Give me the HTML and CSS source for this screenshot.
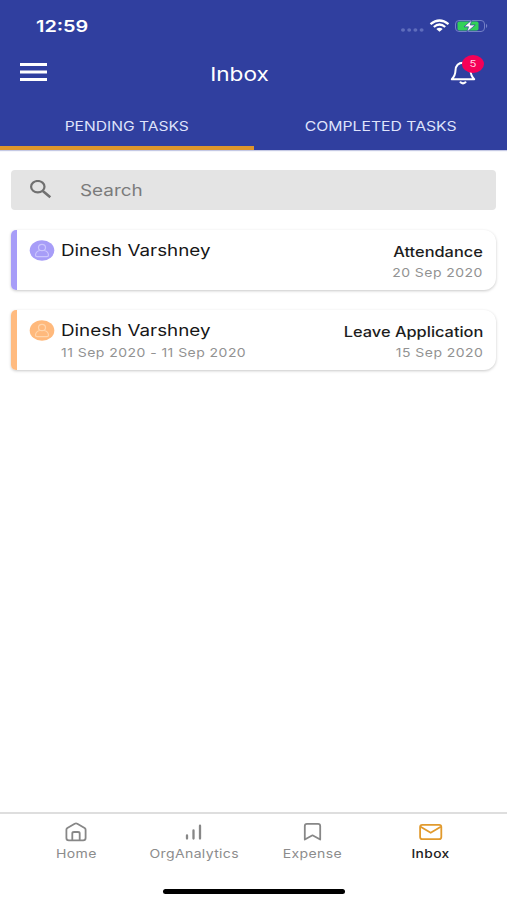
FILE: index.html
```html
<!DOCTYPE html>
<html lang="en">
<head>
<meta charset="utf-8">
<title>Inbox</title>
<link rel="stylesheet" href="styles.css">
</head>
<body>
<div class="screen">
  <header class="header">
    <div class="status">
      <span class="wide time">12:59</span>
      <svg class="status-icons" width="88" height="16" viewBox="0 0 88 16">
        <g fill="#5f6dbc"><ellipse cx="3" cy="12" rx="2" ry="1.700"/><ellipse cx="9.200" cy="12" rx="2" ry="1.700"/><ellipse cx="15.400" cy="12" rx="2" ry="1.700"/><ellipse cx="21.600" cy="12" rx="2" ry="1.700"/></g>
        <g fill="none" stroke="#fff" stroke-width="2.200"><path d="M30.500 6.200Q39.500-1.200 48.500 6.200"/><path d="M33.800 9Q39.500 4 45.200 9"/></g>
        <path d="M36.300 11Q39.500 8.600 42.700 11L39.500 13.800Z" fill="#fff"/>
        <rect x="55.500" y="2.500" width="29" height="11" rx="3.500" fill="none" stroke="#7480c6"/>
        <rect x="57.500" y="3.500" width="21" height="9" rx="1.800" fill="#32d158"/>
        <path d="M71.800 2L64 8.800H68.500L67 14L75.200 7H70.200Z" fill="#fff" stroke="#303f9f" stroke-width=".7"/>
        <path d="M86 5.800Q88.500 8 86 10.200Z" fill="#7480c6"/>
      </svg>
    </div>
    <div class="titlebar">
      <svg class="menu" width="28" height="20" viewBox="0 0 28 20"><path d="M1 1.500H28M1 9H28M1 16.500H28" stroke="#fff" stroke-width="3"/></svg>
      <h1 class="wide title">Inbox</h1>
      <div class="bell">
        <svg width="26" height="24" viewBox="0 0 26 24" fill="none" stroke="#fff" stroke-width="2" stroke-linecap="round" stroke-linejoin="round"><path d="M1.800 18.200H24.200C21.500 15.500 20.700 13.800 20.500 9.500C20.200 4.300 17.500 1.800 13 1.800S5.800 4.300 5.500 9.500C5.300 13.800 4.500 15.500 1.800 18.200Z"/><path d="M10.500 21.300Q13 23.400 15.500 21.300"/></svg>
        <span class="badge"><span class="wide">5</span></span>
      </div>
    </div>
    <nav class="tabs">
      <div class="tab active"><span class="wide tab-pending">PENDING TASKS</span></div>
      <div class="tab"><span class="wide tab-completed">COMPLETED TASKS</span></div>
    </nav>
  </header>
  <main class="content">
    <div class="search">
      <svg width="24" height="20" viewBox="0 0 24 20" fill="none" stroke="#707070"><ellipse cx="8.800" cy="6.700" rx="6.700" ry="5.700" stroke-width="2.200"/><path d="M13.800 11L21.300 17.300" stroke-width="2.600"/></svg>
      <span class="wide placeholder">Search</span>
    </div>
    <article class="card violet">
      <svg class="avatar" width="26" height="22" viewBox="0 0 26 22"><ellipse class="disc" cx="13" cy="10.500" rx="12.300" ry="10.200"/><g class="person"><ellipse cx="13" cy="7.500" rx="3.500" ry="3.200"/><path d="M10.800 10.500Q6.500 11.500 6.500 15.300Q6.500 16.600 8 16.600H18Q19.500 16.600 19.500 15.300Q19.500 11.500 15.200 10.500"/></g></svg>
      <div class="who"><div class="wide name">Dinesh Varshney</div></div>
      <div class="what"><div class="wide kind">Attendance</div><div class="wide date">20 Sep 2020</div></div>
    </article>
    <article class="card orange">
      <svg class="avatar" width="26" height="22" viewBox="0 0 26 22"><ellipse class="disc" cx="13" cy="10.500" rx="12.300" ry="10.200"/><g class="person"><ellipse cx="13" cy="7.500" rx="3.500" ry="3.200"/><path d="M10.800 10.500Q6.500 11.500 6.500 15.300Q6.500 16.600 8 16.600H18Q19.500 16.600 19.500 15.300Q19.500 11.500 15.200 10.500"/></g></svg>
      <div class="who"><div class="wide name">Dinesh Varshney</div><div class="wide date">11 Sep 2020 - 11 Sep 2020</div></div>
      <div class="what"><div class="wide kind">Leave Application</div><div class="wide date">15 Sep 2020</div></div>
    </article>
  </main>
  <footer class="footer">
    <nav class="bottom">
      <div class="item"><svg width="26" height="22" viewBox="0 0 26 22"><path d="M3.400 8.700Q3.400 7.700 4.400 7L11.700 2.700Q13 2 14.300 2.700L21.600 7Q22.600 7.700 22.600 8.700V17Q22.600 19.300 20.200 19.300H5.800Q3.400 19.300 3.400 17Z"/><path d="M9.300 19V12.500Q9.300 11 11 11H15Q16.700 11 16.700 12.500V19"/></svg><span class="wide">Home</span></div>
      <div class="item"><svg width="26" height="22" viewBox="0 0 26 22" stroke-linecap="round"><path d="M6 14.500V17.500M12.500 9.500V17.500M19 4.700V17.500" stroke-width="2.300"/></svg><span class="wide">OrgAnalytics</span></div>
      <div class="item"><svg width="26" height="22" viewBox="0 0 26 22"><path d="M4.800 18.500V5Q4.800 2.800 7 2.800H18Q20.200 2.800 20.200 5V18.500L12.500 14.300Z" stroke-linejoin="round"/></svg><span class="wide">Expense</span></div>
      <div class="item current"><svg width="26" height="22" viewBox="0 0 26 22"><rect x="2.100" y="3.800" width="21.200" height="14.400" rx="2.200"/><path d="M2.600 5.800L12.700 11.800L22.800 5.800"/></svg><span class="wide">Inbox</span></div>
    </nav>
    <div class="home-bar"></div>
  </footer>
</div>
</body>
</html>
```
FILE: styles.css
```css
* { box-sizing: border-box; }
body { margin: 0; font-family: Inter, "Liberation Sans", sans-serif; background: #fff; }
.screen { width: 507px; height: 900px; display: flex; flex-direction: column; overflow: hidden; }
.wide { display: block; white-space: nowrap; transform: scaleX(1.2); transform-origin: center; }

.header { height: 150px; background: #303f9f; color: #fff; display: flex; flex-direction: column; box-shadow: 0 1px 1px #c5c9e4; }
.status { height: 52px; padding: 0 19px 0 36px; display: flex; align-items: center; justify-content: space-between; }
.time { font-size: 16px; font-weight: 600; transform: scaleX(1.24); transform-origin: left; }
.titlebar { height: 46px; padding: 0 31px 5px 19px; display: grid; grid-template-columns: 60px 1fr 60px; align-items: center; }
.title { margin: 3px 16px 0 0; font-size: 19px; font-weight: 400; text-align: center; transform: scaleX(1.19); }
.bell { position: relative; justify-self: end; height: 24px; width: 26px; }
.badge { position: absolute; left: 12px; top: -6px; width: 22px; height: 18px; border-radius: 50%; background: #f50057; font-size: 9.5px; line-height: 18px; text-align: center; color: #ffd5e2; }
.tabs { height: 52px; display: grid; grid-template-columns: 1fr 1fr; }
.tab { display: flex; justify-content: center; padding-top: 19px; font-size: 13px; line-height: 18px; color: #dfe3fb; border-bottom: 4px solid transparent; }
.tab.active { border-bottom-color: #de962c; padding-right: 1px; }
.tab-completed { transform: scaleX(1.21); }

.content { flex: 1; padding: 20px 11px 0 11px; }
.search { height: 40px; background: #e4e4e4; border-radius: 4px; display: flex; align-items: center; padding-left: 18px; }
.search svg { margin-top: -1px; }
.placeholder { margin-left: 27px; font-size: 16px; color: #7b7b7b; transform: scaleX(1.18); transform-origin: left; }
.card { height: 60px; margin-top: 20px; display: flex; padding: 10px 13px 0 12px; border-left: 6px solid; border-radius: 5px 12px 12px 5px; box-shadow: 0 1px 3px rgba(0,0,0,.22); }
.violet { border-left-color: #a79df8; }
.orange { border-left-color: #ffbb80; }
.avatar { flex: none; }
.person { fill: none; stroke-width: 1.2; }
.violet .disc { fill: #a79df8; }
.violet .person { stroke: #cbc5fd; }
.orange .disc { fill: #ffb97c; }
.orange .person { stroke: #ffd5ac; }
.who { margin-left: 6px; flex: 1; }
.who .wide { transform-origin: left; }
.what .wide { transform-origin: right; }
.what { text-align: right; }
.name { font-size: 16px; line-height: 20px; color: #161616; transform: scaleX(1.175); }
.kind { font-size: 14px; line-height: 24px; font-weight: 500; color: #1d1d1d; transform: scaleX(1.17); }
.date { font-size: 12px; line-height: 18px; color: #929292; letter-spacing: .4px; transform: scaleX(1.165); }
.who .date { margin-top: 4px; }

.footer { height: 88px; border-top: 2px solid #dedede; }
.bottom { padding: 7px 17px 0; display: grid; grid-template-columns: repeat(4, 1fr); }
.item { display: flex; flex-direction: column; align-items: center; font-size: 12px; line-height: 18px; color: #8c8c8c; letter-spacing: .3px; }
.item svg { fill: none; stroke: #878787; stroke-width: 1.8; }
.item .wide { margin-top: 2px; transform: scaleX(1.17); }
.item.current { color: #222; font-weight: 500; }
.item.current .wide { transform: scaleX(1.15); }
.item.current svg { stroke: #e19a2d; }
.home-bar { width: 182px; height: 5px; border-radius: 3px; background: #000; margin: 26px auto 0; }
```
